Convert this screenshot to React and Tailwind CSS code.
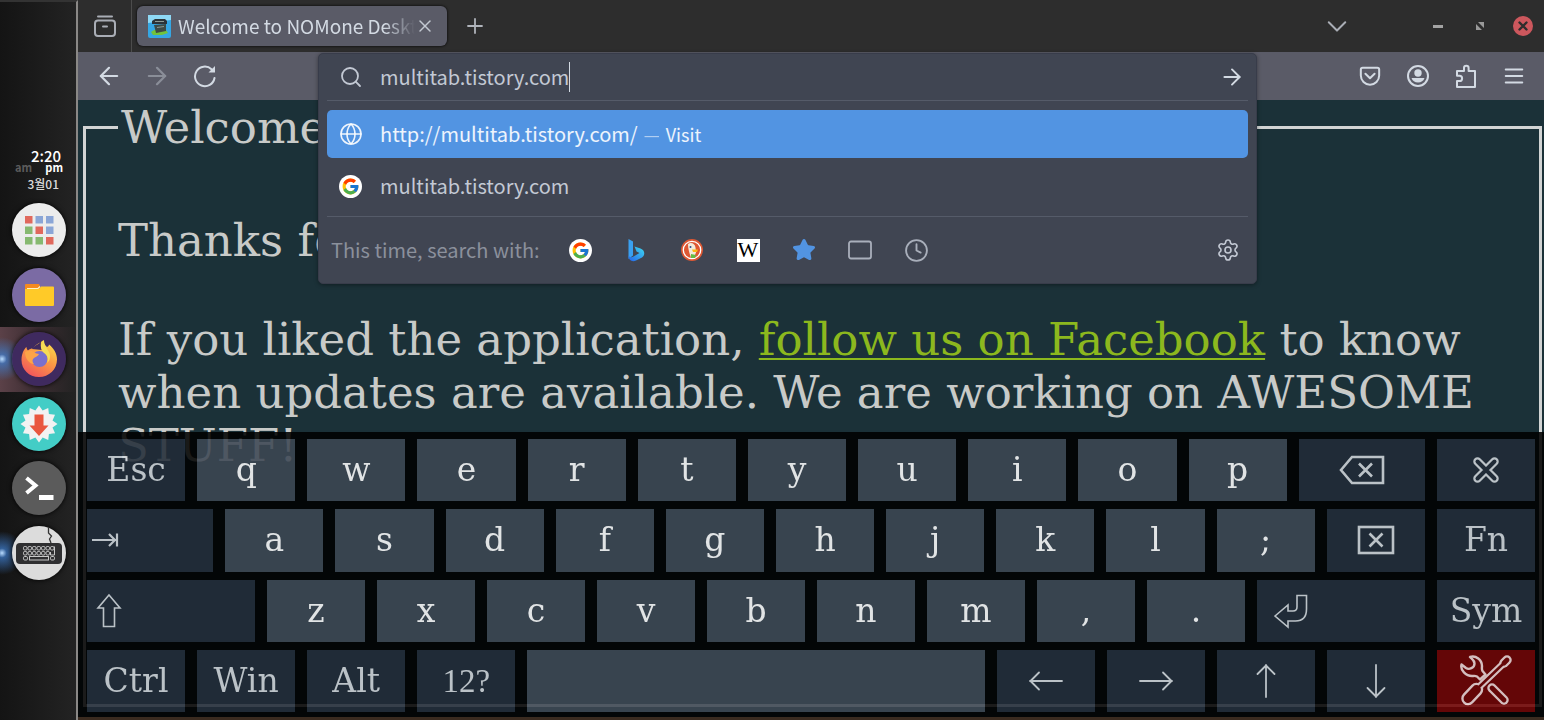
import React, { useState } from 'react';
import { FcGoogle } from 'react-icons/fc';
import { Star, X, Plus, ArrowLeft, ArrowRight, Search, Globe, Settings, Clock } from 'lucide-react';

const Svg = ({ size = 24, box = 24, stroke = 1.8, className = '', children }) => (
  <svg
    width={size}
    height={size}
    viewBox={`0 0 ${box} ${box}`}
    fill="none"
    stroke="currentColor"
    strokeWidth={stroke}
    strokeLinecap="round"
    strokeLinejoin="round"
    className={className}
    aria-hidden="true"
  >
    {children}
  </svg>
);

// ---------- dock ----------

const AppsIcon = () => {
  const colors = ['#e0685c', '#8aa5d6', '#8aa5d6', '#86b970', '#e0685c', '#8aa5d6', '#86b970', '#86b970', '#e0685c'];
  return (
    <svg width="54" height="54" viewBox="0 0 54 54" aria-hidden="true">
      <circle cx="27" cy="27" r="27" fill="#ececec" />
      {colors.map((c, i) => (
        <rect key={i} x={13 + (i % 3) * 10.5} y={13 + Math.floor(i / 3) * 10.5} width="7.5" height="7.5" fill={c} />
      ))}
    </svg>
  );
};

const FilesIcon = () => (
  <svg width="54" height="54" viewBox="0 0 54 54" aria-hidden="true">
    <circle cx="27" cy="27" r="27" fill="#7b6ba4" />
    <path d="M13 17a1 1 0 0 1 1-1h13l1 2v6H13z" fill="#f58a1f" />
    <path d="M13 21h14l2-2.500h12a1 1 0 0 1 1 1V37a1 1 0 0 1-1 1H14a1 1 0 0 1-1-1z" fill="#ffca28" />
    <path d="M15 20.500h11l2-2" stroke="#fff3c4" strokeWidth="1.200" fill="none" />
  </svg>
);

const FirefoxIcon = () => (
  <svg width="54" height="54" viewBox="0 0 54 54" aria-hidden="true">
    <defs>
      <linearGradient id="ffBody" x1="0.8" y1="0" x2="0.2" y2="1">
        <stop offset="0" stopColor="#fbe04a" />
        <stop offset="0.45" stopColor="#fb9a44" />
        <stop offset="1" stopColor="#f0505e" />
      </linearGradient>
    </defs>
    <circle cx="27" cy="27" r="27" fill="#3f2a5f" />
    <path
      d="M12 18c1-1 1-2 2.500-3 0 1.500.500 2.500 1.500 3.500 1.500-1.500 3-2 5-2 2-4 6.500-5 10.500-8.500 0 3 1 5 3.500 7 1.500-.500 1.800-1.500 2-2.500 5 4 8 9 8 15 0 10-8 17.500-18 17.500S9.500 37.500 9.500 28c0-4 1-7.500 2.500-10z"
      fill="url(#ffBody)"
    />
    <path d="M20 17c2-4 7-4 9-8 0 3-1 6 1 9z" fill="#3f2a5f" />
    <circle cx="27.500" cy="27" r="8" fill="#7a70cc" />
    <path d="M13 20c3-2 6-2 9 0 1.500 1.500 3.500 1.500 5 2-1 2.500-3.500 3-5 4-2 1.500-2 4 0 6-5 0-9-6-9-12z" fill="#fda447" />
    <path d="M32 8c0 5 3 8 5 12 2 4 1 9-2 11 2-5 0-8-3-10-3-3-5-8 0-13z" fill="#f6dc55" />
  </svg>
);

// twelve pointed badge
const burst = Array.from({ length: 24 }, (_, i) => {
  const r = i % 2 ? 14 : 18.5;
  const a = (i / 24) * Math.PI * 2 - Math.PI / 2;
  return `${27 + r * Math.cos(a)},${27 + r * Math.sin(a)}`;
}).join(' ');

const UpdatesIcon = () => (
  <svg width="54" height="54" viewBox="0 0 54 54" aria-hidden="true">
    <circle cx="27" cy="27" r="27" fill="#43cdc6" />
    <polygon points={burst} fill="#f2f2f2" />
    <path d="M22.500 17.500h9v11h5L27 39l-9.500-10.500h5z" fill="#e9573f" />
  </svg>
);

const TerminalIcon = () => (
  <svg width="54" height="54" viewBox="0 0 54 54" aria-hidden="true">
    <circle cx="27" cy="27" r="27" fill="#5b5b5b" />
    <path d="M14.500 17l9 7.500-9 7.500" fill="none" stroke="#fff" strokeWidth="4" />
    <rect x="27" y="34" width="14.500" height="5" fill="#fff" />
  </svg>
);

const KeyboardIcon = () => (
  <svg width="54" height="54" viewBox="0 0 54 54" aria-hidden="true">
    <circle cx="27" cy="27" r="27" fill="#dcdcdc" />
    <path d="M36.500 1v6l3 3-2 3 1.500 4" fill="none" stroke="#333" strokeWidth="1.300" />
    <rect x="4" y="17" width="46" height="21" rx="4" fill="#2f2f31" />
    <g stroke="#c8c8c8" strokeWidth="1" fill="none">
      {[0, 1, 2, 3, 4, 5, 6].map((i) => (
        <rect key={i} x={11.5 + i * 4.5} y="20.500" width="3.500" height="3.500" rx="1.200" />
      ))}
      {[0, 1, 2, 3, 4, 5].map((i) => (
        <rect key={i} x={11.5 + i * 4.5} y="25.500" width="3.500" height="3.500" rx="1.200" />
      ))}
      <path d="M42.500 20.500v8.500h-4v-3" />
      <rect x="11.500" y="30.500" width="4" height="3.500" rx="1.200" />
      <rect x="17.500" y="30.500" width="19" height="3.500" />
      <rect x="38.500" y="30.500" width="4" height="3.500" rx="1.200" />
    </g>
  </svg>
);

const dockItems = [
  { name: 'Applications', icon: AppsIcon },
  { name: 'Files', icon: FilesIcon },
  { name: 'Firefox', icon: FirefoxIcon, running: true, active: true },
  { name: 'Updates', icon: UpdatesIcon },
  { name: 'Terminal', icon: TerminalIcon },
  { name: 'Keyboard', icon: KeyboardIcon, running: true },
];

const Dock = () => (
  <aside className="flex w-[78px] shrink-0 flex-col border-t-2 border-r-2 border-t-[#333] border-r-[#8a8886] bg-linear-to-r from-[#141414] to-[#232323] pt-[146px] font-['Noto_Sans_CJK_KR',sans-serif] text-white">
    <div className="flex h-[50px] flex-col pr-[13px] text-right font-medium">
      <time className="pr-[2px] text-[15px] leading-[15px]">2:20</time>
      <div className="flex justify-between pl-[15px] text-[11px] leading-[9px] font-bold">
        <span className="text-[#5c5c5c]">am</span>
        <span>pm</span>
      </div>
      <span className="pt-[6px] pr-1 text-[12px] leading-[12px] text-[#dcdcdc]">3월01</span>
    </div>
    <ul className="grid h-[387px] grid-rows-6">
      {dockItems.map(({ name, icon: Icon, running, active }) => (
        <li
          key={name}
          className={`relative flex items-center overflow-hidden pl-3 ${active ? 'bg-linear-to-r from-[#5b4148] via-[#3b2c31] to-[#232323]' : ''}`}
        >
          {running && (
            <span className="absolute -left-5 size-[44px] rounded-full bg-radial from-[#b9dcff] via-[#3f7fd0]/70 via-15% to-transparent to-70%" />
          )}
          <button type="button" aria-label={name} className="relative rounded-full shadow-[0_0_5px_#000]">
            <Icon />
          </button>
        </li>
      ))}
    </ul>
  </aside>
);

// ---------- browser ----------

const iconButton = 'flex h-8 w-12 items-center justify-center text-[#d3dae3]';

const TabBar = () => (
  <header className="flex h-[52px] shrink-0 items-center bg-[#2d2d2d] text-[#a9adb5]">
    <button type="button" aria-label="Recent browsing" className="flex h-full w-[54px] items-center justify-center border-r border-[#4c4c4c]">
      <Svg size={24} stroke={2}>
        <path d="M5 2.500h14" />
        <rect x="2" y="6.500" width="20" height="15.500" rx="3" />
        <path d="M10 12.500h4" />
      </Svg>
    </button>
    <div className="ml-[5px] flex h-10 w-[310px] items-center rounded-md bg-[#5a5b67] pr-3 pl-[11px] shadow-[0_0_3px_#000]">
      <svg width="23" height="23" viewBox="0 0 23 23" className="shrink-0" aria-hidden="true">
        <rect width="23" height="23" rx="2" fill="#35a7e4" />
        <path d="M0 0h23v5L0 8z" fill="#8ed8f5" />
        <path d="M3 17l3-2h12l2 3-6 2H5z" fill="#72c33c" />
        <path d="M4 6l3-2h10l2 2v3H4z" fill="#2b3338" />
        <path d="M6 10l12-1v7l-10 2-1-4z" fill="#3d4a45" />
        <path d="M7 6.500h9M9 12.500l7-1" stroke="#8b9a94" strokeWidth="1" />
      </svg>
      <span className="ml-[7px] min-w-0 flex-1 overflow-hidden mask-r-from-87% text-[19px] leading-8 whitespace-nowrap text-[#d3dae3]">
        Welcome to NOMone Desktop
      </span>
      <button type="button" aria-label="Close tab" className="text-[#c3c9d2]">
        <X size={20} strokeWidth={1.8} />
      </button>
    </div>
    <button type="button" aria-label="New tab" className="ml-4 text-[#b0b4bb]">
      <Plus size={24} strokeWidth={1.8} />
    </button>
    <div className="ml-auto flex items-center">
      <button type="button" aria-label="List all tabs" className="mr-[85px]">
        <Svg size={22} stroke={2.2}>
          <path d="M3 8l9 9 9-9" />
        </Svg>
      </button>
      <button type="button" aria-label="Minimize" className="mr-8">
        <span className="block h-[3px] w-[10px] bg-[#a3a3a3]" />
      </button>
      <button type="button" aria-label="Restore" className="mr-7">
        <svg width="10" height="10" viewBox="0 0 10 10" fill="#999" aria-hidden="true">
          <path d="M3 1h6v6zM1 3l6 6H1z" />
        </svg>
      </button>
      <button type="button" aria-label="Close" className="mr-[11px]">
        <svg width="20" height="20" viewBox="0 0 20 20" aria-hidden="true">
          <circle cx="10" cy="10" r="10" fill="#cc575d" />
          <path d="M6.500 6.500l7 7M13.500 6.500l-7 7" stroke="#2d2d2d" strokeWidth="2.400" strokeLinecap="round" />
        </svg>
      </button>
    </div>
  </header>
);

const GoogleBadge = () => (
  <span className="flex size-[23px] items-center justify-center rounded-full bg-white">
    <FcGoogle size={19} />
  </span>
);

const BingIcon = () => (
  <svg width="24" height="24" viewBox="0 0 24 24" aria-hidden="true">
    <defs>
      <linearGradient id="bingLow" x1="0" y1="1" x2="1" y2="0">
        <stop offset="0" stopColor="#2563eb" />
        <stop offset="1" stopColor="#3fdcf0" />
      </linearGradient>
    </defs>
    <path d="M4.500 1l4.500 2.500v14l-4.500 3.500z" fill="#3aa0f0" />
    <path d="M4.500 17.500c1 2 3 2 5 1l6-3.500-3-1.500-2-5 6 2c5 2 4.500 7 1.500 9l-6 3c-4 2-7.500-.500-7.500-5z" fill="url(#bingLow)" />
  </svg>
);

const DuckIcon = () => (
  <svg width="22" height="22" viewBox="0 0 22 22" aria-hidden="true">
    <circle cx="11" cy="11" r="11" fill="#de5833" />
    <circle cx="11" cy="11" r="8.700" fill="none" stroke="#fff" strokeWidth="1.300" />
    <path d="M7 5c3-2 7-.500 7.500 3.500l.500 5-2 5-3 .500C9 15 7 11 7 5z" fill="#f3ead9" />
    <path d="M11 10.500h6l-1 2.500h-4z" fill="#fdb714" />
    <path d="M10 15l5 1-1 3h-4z" fill="#65bc46" />
    <circle cx="9.500" cy="8" r="1" fill="#2d4f8e" />
  </svg>
);

const WikiIcon = () => (
  <span className="flex size-[23px] items-center justify-center bg-white font-['Liberation_Serif',serif] text-[22px] leading-none text-black">
    W
  </span>
);

const engines = [
  { name: 'Google', icon: <GoogleBadge /> },
  { name: 'Bing', icon: <BingIcon /> },
  { name: 'DuckDuckGo', icon: <DuckIcon /> },
  { name: 'Wikipedia', icon: <WikiIcon /> },
  { name: 'Bookmarks', icon: <Star size={24} fill="#5294e2" className="text-[#5294e2]" /> },
  {
    name: 'Tabs',
    icon: (
      <Svg size={24}>
        <rect x="1" y="3.500" width="22" height="17" rx="2" />
      </Svg>
    ),
  },
  { name: 'History', icon: <Clock size={25} strokeWidth={1.8} /> },
];

const UrlPanel = () => {
  const [url, setUrl] = useState('multitab.tistory.com');

  return (
    <div className="absolute inset-x-0 top-px z-10 rounded-[5px] border border-[#383c4a] bg-[#404552] px-2 text-[20px] text-[#c3c9d4] shadow-[0_1px_4px_rgba(0,0,0,0.4)]">
      <div className="flex h-[47px] items-center border-b border-[#555b69] pr-[3px] pl-3">
        <Search size={24} strokeWidth={1.8} className="mr-[17px]" />
        <input
          type="text"
          aria-label="Address"
          value={url}
          onChange={(e) => setUrl(e.target.value)}
          className="field-sizing-content bg-transparent outline-none"
        />
        <span className="h-[30px] w-px bg-[#d3dae3]" />
        <button type="button" aria-label="Go" className="ml-auto text-[#d3dae3]">
          <ArrowRight size={26} strokeWidth={1.8} />
        </button>
      </div>
      <ul className="pt-[9px]">
        <li className="flex h-12 items-center rounded-[5px] bg-[#5294e2] pl-3 text-white/90">
          <Globe size={24} strokeWidth={1.6} className="mr-[17px]" />
          http://multitab.tistory.com/
          <span className="ml-[6px] text-[18px]">
            <span className="mr-[6px] opacity-60">—</span>Visit
          </span>
        </li>
        <li className="mt-1 flex h-12 items-center pl-3">
          <span className="mr-[18px]">
            <GoogleBadge />
          </span>
          multitab.tistory.com
        </li>
      </ul>
      <div className="mt-[6px] flex h-[67px] items-center border-t border-[#555b69] pl-1">
        <span className="w-[221px] text-[#8b909c]">This time, search with:</span>
        {engines.map(({ name, icon }) => (
          <button key={name} type="button" aria-label={name} className="flex h-8 w-14 items-center justify-center text-[#a9afbb]">
            {icon}
          </button>
        ))}
        <button type="button" aria-label="Search settings" className="mr-2 ml-auto">
          <Settings size={24} strokeWidth={1.6} />
        </button>
      </div>
    </div>
  );
};

const Toolbar = () => (
  <nav className="flex h-12 shrink-0 items-center bg-[#5a5b67]">
    <div className="flex w-[240px] shrink-0 pl-[7px]">
      <button type="button" aria-label="Back" className={iconButton}>
        <ArrowLeft size={28} strokeWidth={1.9} />
      </button>
      <button type="button" aria-label="Forward" className={`${iconButton} opacity-40`}>
        <ArrowRight size={28} strokeWidth={1.9} />
      </button>
      <button type="button" aria-label="Reload" className={iconButton}>
        <Svg size={24} stroke={2}>
          <path d="M21.500 14A9.800 9.800 0 1 1 18.500 5.200" />
          <path d="M22 2v6.500h-6.500z" fill="currentColor" stroke="none" />
        </Svg>
      </button>
    </div>
    <div className="relative h-full min-w-0 flex-1">
      <UrlPanel />
    </div>
    <div className="flex w-[287px] shrink-0 justify-end pr-[6px]">
      <button type="button" aria-label="Save to Pocket" className={iconButton}>
        <Svg size={22} stroke={2.2}>
          <path d="M2 5a2 2 0 0 1 2-2h16a2 2 0 0 1 2 2v6.500a10 10 0 0 1-20 0z" />
          <path d="M7 9.500l5 5 5-5" />
        </Svg>
      </button>
      <button type="button" aria-label="Account" className={iconButton}>
        <Svg size={24} stroke={2}>
          <circle cx="12" cy="12" r="10" />
          <circle cx="12" cy="9" r="3.700" fill="currentColor" stroke="none" />
          <path d="M5.500 14h13a6.800 6.300 0 0 1-13 0z" fill="currentColor" stroke="none" />
        </Svg>
      </button>
      <button type="button" aria-label="Extensions" className={iconButton}>
        <Svg size={24} stroke={2}>
          <path d="M3 23v-6h2.500a2.600 2.600 0 0 0 0-5.200H3V7h7V4a2.300 2.300 0 0 1 4.600 0v3H21v16z" />
        </Svg>
      </button>
      <button type="button" aria-label="Menu" className={iconButton}>
        <Svg size={22} stroke={2.2}>
          <path d="M3 5h18M3 12h18M3 19h18" />
        </Svg>
      </button>
    </div>
  </nav>
);

const WelcomePage = () => (
  <main className="flex min-h-0 flex-1 overflow-hidden bg-[#1b3138] pt-px pr-[2px] pb-[10px] pl-[5px] font-['DejaVu_Serif',serif] text-[45px] leading-[53px] text-[#c8cac8]">
    <fieldset className="min-w-0 flex-1 border-[3px] border-[#d2d4d4] pr-8 pl-8">
      <legend className="px-[3px]">Welcome</legend>
      <p className="mt-[60px]">Thanks for</p>
      <p className="mt-[46px]">
        If you liked the application,{' '}
        <a href="#facebook" className="text-[#8cb81e] underline decoration-2 underline-offset-3">
          follow us on Facebook
        </a>{' '}
        to know when updates are available. We are working on AWESOME STUFF!
      </p>
    </fieldset>
  </main>
);

// ---------- on-screen keyboard ----------

const TabKey = () => (
  <Svg size={28} box={28} stroke={2.2}>
    <path d="M1 14h24M18 8l6 6-6 6M26 7.500v13" strokeLinecap="butt" />
  </Svg>
);

const ShiftKey = () => (
  <Svg size={36} box={36} stroke={1.6}>
    <path d="M18 2l11 13h-5.500v18.500h-11V15H7z" strokeLinejoin="miter" />
  </Svg>
);

const EnterKey = () => (
  <Svg size={36} box={36} stroke={1.6}>
    <path d="M2 23L15 12v6h5c3 0 4-1 4-4V2.500h9.500V16c0 8-4 12-11 12H15v6z" strokeLinejoin="miter" />
  </Svg>
);

const BackspaceKey = () => (
  <svg width="46" height="30" viewBox="0 0 46 30" fill="none" stroke="currentColor" strokeWidth="2.600" aria-hidden="true">
    <path d="M2 15L13 2h31v26H13z" />
    <path d="M20 8.500l13 13M33 8.500l-13 13" />
  </svg>
);

const DeleteKey = () => (
  <svg width="38" height="30" viewBox="0 0 38 30" fill="none" stroke="currentColor" strokeWidth="2.600" aria-hidden="true">
    <rect x="2" y="2" width="34" height="26" />
    <path d="M12.500 8.500l13 13M25.500 8.500l-13 13" />
  </svg>
);

// outlined shapes: a wide stroke with a narrower one in the key colour on top
const HideKey = () => (
  <Svg size={28} box={28} stroke={8.5}>
    <path d="M5.500 5.500l17 17M22.500 5.500l-17 17" />
    <path d="M5.500 5.500l17 17M22.500 5.500l-17 17" stroke="#212b37" strokeWidth="4" />
  </Svg>
);

const ToolsKey = () => (
  <Svg size={52} box={52} stroke={2.4}>
    {/* wrench */}
    <path
      d="M10 2C16 0 22 5 22 11c0 2-.500 3 .500 5l3 3.500-5.500 5-3-3c-2-1-3-.500-5-.500C6 21 0 15 1.500 9.500L6 13c3 2 8.500 0 8.500-4.500 0-3-2-4-4.500-6.500z"
    />
    <path d="M32 33l12 12" strokeWidth="9.500" />
    <path d="M32 33l12 12" stroke="#6f0000" strokeWidth="4.800" />
    {/* screwdriver */}
    <path d="M20 31L43 9" strokeWidth="7" />
    <path d="M44 8l3-3" strokeWidth="9.500" />
    <path d="M16.500 34.500L8 43.500" strokeWidth="13.500" />
    <g stroke="#6f0000">
      <path d="M20 31L43 9" strokeWidth="2.600" />
      <path d="M44 8l3-3" strokeWidth="4.800" />
      <path d="M16.500 34.500L8 43.500" strokeWidth="8.800" />
    </g>
  </Svg>
);

const Arrow = ({ turn = '' }) => (
  <Svg size={34} box={34} className={turn}>
    <path d="M33 17H1M10 8.500L1.500 17l8.500 8.500" />
  </Svg>
);

const mod = (label, extra) => ({ label, name: label, dark: true, ...extra });
const letters = (chars) => [...chars].map((c) => ({ label: c, name: c }));

const rows = [
  [
    mod('Esc'),
    ...letters('qwertyuiop'),
    mod(<BackspaceKey />, { name: 'Backspace', size: 'grow-[126]' }),
    mod(<HideKey />, { name: 'Hide keyboard' }),
  ],
  [
    mod(<TabKey />, { name: 'Tab', size: 'grow-[126]', pad: 'mr-auto ml-1' }),
    ...letters('asdfghjkl;'),
    mod(<DeleteKey />, { name: 'Delete' }),
    mod('Fn'),
  ],
  [
    mod(<ShiftKey />, { name: 'Shift', size: 'grow-[168]', pad: 'mr-auto ml-1' }),
    ...letters('zxcvbnm,.'),
    mod(<EnterKey />, { name: 'Enter', size: 'grow-[168]', pad: 'mr-auto ml-4' }),
    mod('Sym'),
  ],
  [
    mod('Ctrl'),
    mod('Win'),
    mod('Alt'),
    mod('12?', { pad: "font-['Liberation_Serif',serif]" }),
    { label: '', name: 'Space', size: 'grow-[457]' },
    mod(<Arrow />, { name: 'Left' }),
    mod(<Arrow turn="rotate-180" />, { name: 'Right' }),
    mod(<Arrow turn="rotate-90" />, { name: 'Up' }),
    mod(<Arrow turn="-rotate-90" />, { name: 'Down' }),
    mod(<ToolsKey />, { name: 'Settings', color: 'bg-[#6f0000] text-[#f0d4d4]' }),
  ],
];

const Key = ({ label, name, dark, size = 'grow-[98]', pad = '', color }) => (
  <button
    type="button"
    aria-label={name}
    className={`flex min-w-0 basis-0 items-center justify-center ${size} ${
      color || (dark ? 'bg-[#212b37] text-[#d3d8dd]' : 'bg-[#3d4753] text-white')
    }`}
  >
    <span className={pad}>{label}</span>
  </button>
);

const Keyboard = () => (
  <section
    aria-label="On-screen keyboard"
    className="absolute inset-x-0 bottom-[3px] z-20 grid h-[285px] grid-rows-4 gap-2 bg-black px-[9px] pt-[7px] pb-[5px] font-['DejaVu_Serif',serif] text-[33px] leading-[40px] opacity-[0.87]"
  >
    {rows.map((keys, i) => (
      <div key={i} className="flex gap-3">
        {keys.map((k) => (
          <Key key={k.name} {...k} />
        ))}
      </div>
    ))}
  </section>
);

const App = () => (
  <div className="flex h-screen overflow-hidden bg-[#3a2b20]">
    <Dock />
    <div className="relative flex min-w-0 flex-1 flex-col pb-[3px] font-['Noto_Sans_CJK_SC',sans-serif]">
      <TabBar />
      <Toolbar />
      <WelcomePage />
      <Keyboard />
    </div>
  </div>
);

export default App;
